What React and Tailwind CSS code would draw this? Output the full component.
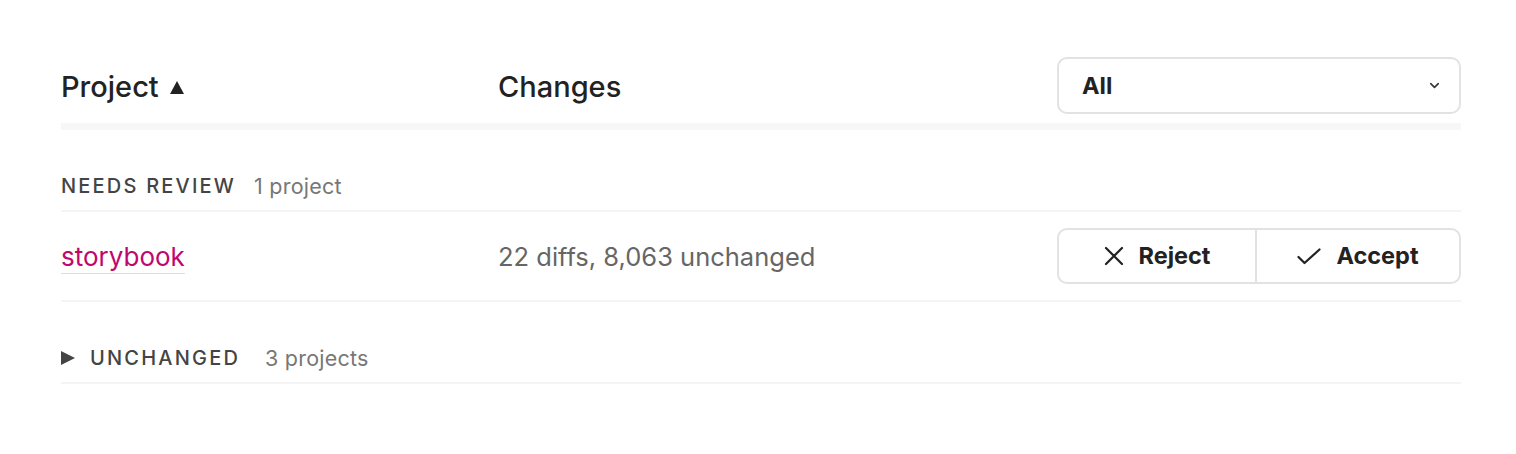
import React from "react";
import { ChevronDown } from "lucide-react";

const Cross = () => (
    <svg width="20" height="20" viewBox="0 0 20 20" fill="none" stroke="currentColor" strokeWidth="2.2" strokeLinecap="round">
        <path d="M2 2 18 18M18 2 2 18" />
    </svg>
);

const Tick = () => (
    <svg width="24" height="17" viewBox="0 0 24 17" fill="none" stroke="currentColor" strokeWidth="2.2" strokeLinecap="round" strokeLinejoin="round">
        <path d="M1.5 9 7.5 15 22.5 1.5" />
    </svg>
);

const App = () => {
    return (
        <div className="min-h-screen bg-white pl-[61px] pr-[55px] pb-10 text-[#222] font-['Inter',sans-serif]">
            <div className="grid grid-cols-[437px_1fr_404px] items-center pt-[57px]">
                <div className="flex items-center gap-[11px] text-[29px] font-medium leading-8 pt-[2px]">
                    Project
                    <svg width="14" height="13" viewBox="0 0 14 13" className="mt-[2px]">
                        <path d="M7 0 14 13H0Z" fill="#222" />
                    </svg>
                </div>
                <div className="text-[29px] font-medium leading-8 pt-[2px]">Changes</div>
                <button className="flex h-[57px] items-center justify-between rounded-[10px] border-2 border-[#e2e2e2] pl-[23px] pr-[17px] text-[23.5px] font-bold">
                    All
                    <ChevronDown size={15} strokeWidth={2.5} className="text-[#333]" />
                </button>
            </div>
            <div className="mt-[9px] h-[7px] bg-[#f7f7f7]" />

            <div className="mt-[44px] flex items-center gap-[18px] border-b-2 border-[#f4f4f4] pb-[12px] text-[20px] leading-6">
                <span className="font-medium uppercase tracking-[0.11em] text-[#444]">Needs review</span>
                <span className="text-[21.5px] tracking-[0.01em] text-[#777]">1 project</span>
            </div>

            <div className="grid grid-cols-[437px_1fr_404px] items-center border-b-2 border-[#f4f4f4] py-[16px]">
                <div className="pt-[2px]">
                    <a className="text-[26px] leading-8 text-[#c1066f] underline decoration-[#ddd] decoration-1 underline-offset-[7px]">
                        storybook
                    </a>
                </div>
                <div className="text-[25.5px] leading-8 pt-[2px] text-[#666]">22 diffs, 8,063 unchanged</div>
                <div className="flex h-[56px] rounded-[10px] border-2 border-[#e2e2e2] text-[23.5px] font-bold">
                    <button className="flex w-[198px] items-center justify-center gap-[15px] border-r-2 border-[#e2e2e2]">
                        <Cross /> Reject
                    </button>
                    <button className="flex flex-1 items-center justify-center gap-[15px]">
                        <Tick /> Accept
                    </button>
                </div>
            </div>

            <div className="flex items-center gap-[25px] border-b-2 border-[#f4f4f4] pb-[12px] pt-[44px] text-[20px] leading-6">
                <span className="flex items-center gap-[15px] font-medium uppercase tracking-[0.11em] text-[#444]">
                    <svg width="14" height="14" viewBox="0 0 14 14">
                        <path d="M0 0 14 7 0 14Z" fill="#444" />
                    </svg>
                    Unchanged
                </span>
                <span className="text-[21.5px] tracking-[0.01em] text-[#777]">3 projects</span>
            </div>
        </div>
    );
};

export default App;
